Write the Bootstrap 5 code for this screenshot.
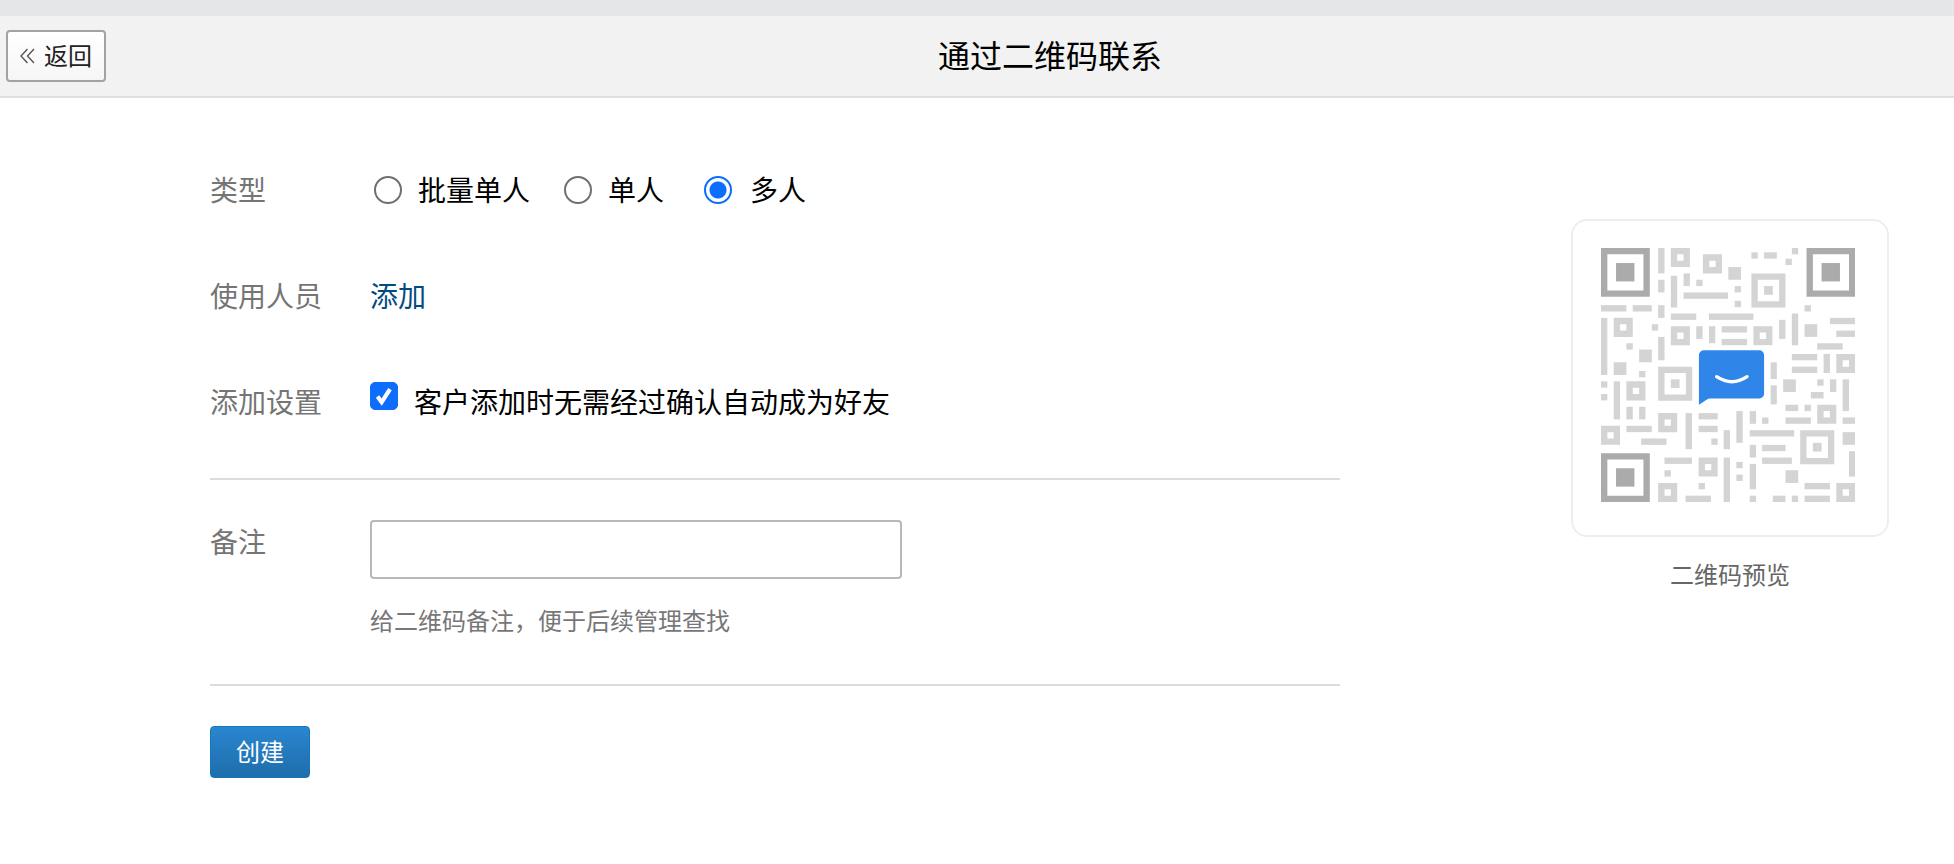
<!DOCTYPE html>
<html lang="zh-CN">
<head>
<meta charset="utf-8">
<title>通过二维码联系</title>
<link rel="stylesheet" href="https://cdn.jsdelivr.net/npm/bootstrap@5.3.0/dist/css/bootstrap.min.css">
<style>
html,body{height:100%;}
body{font-family:"Noto Sans CJK SC","Noto Sans",sans-serif;background:#fff;color:#000;overflow:hidden;}
.topstrip{height:16px;background:#e5e6e8;}
.pagehead{height:82px;background:#f2f2f2;border-bottom:2px solid #dcdfe3;padding-left:6px;}
.backbtn{width:100px;height:52px;padding:0;border:2px solid #a2a2a2;border-radius:4px;background:linear-gradient(#fff,#f6f6f6);color:#222;font-size:24px;line-height:1;gap:9px;}
.backbtn:hover{background:#fff;border-color:#a2a2a2;color:#222;}
.backbtn span{padding-bottom:3px;}
.headtitle{font-size:32px;font-weight:400;margin:0;padding:0 0 4px 40px;line-height:1;}
.mainarea{padding-left:210px;}
.formcol{width:1130px;padding-top:39px;}
.formrow{height:106px;}
.fieldlabel{width:160px;font-size:28px;color:#757575;line-height:1;flex:none;margin:0;padding-bottom:2px;}
.optlabel{font-size:28px;line-height:1;margin:0;padding-bottom:2px;}
.form-check-input.bigradio{width:28px;height:28px;margin:0;border:2px solid #707070;flex:none;background-color:#fff;}
.form-check-input.bigradio:checked{background-color:#fff;border-color:#0d6efd;background-image:radial-gradient(circle,#0d6efd 0,#0d6efd 8px,transparent 9px);background-size:100% 100%;}
.form-check-input.bigcheck{width:28px;height:28px;margin:-12px 0 0;flex:none;border-radius:5px;background-size:100% 100%;}
.form-check-input.bigcheck:checked{background-image:url("data:image/svg+xml,%3csvg xmlns='http://www.w3.org/2000/svg' viewBox='0 0 28 28'%3e%3cpath fill='none' stroke='%23fff' stroke-width='4.500' d='M7 14.500l4.500 6 9-14'/%3e%3c/svg%3e");}
.radiopad{margin-left:4px;gap:16px;}
.radiogap{margin-left:34px;gap:16px;}
.radiogap-wide{margin-left:40px;gap:18px;}
.addlink{font-size:28px;color:#004b7f;text-decoration:none;line-height:1;padding-bottom:2px;}
.rule{height:2px;background:#dcdcdf;}
.rule-a{margin-top:23px;}
.noterow{padding-top:40px;}
.noterow .fieldlabel{margin-top:7px;}
.noteinput{width:532px;height:59px;border:2px solid #b8b8b8;border-radius:4px;}
.hinttext{font-size:24px;line-height:1;color:#777;margin-top:29px;margin-bottom:52px;}
.createbtn{width:100px;height:52px;margin-top:40px;padding:0 0 2px;font-size:24px;line-height:1;color:#fff;background:linear-gradient(#2a86d0,#1f6dab);border:1px solid #0f78bf;border-radius:4px;}
.createbtn:hover{color:#fff;background:linear-gradient(#2a86d0,#1f6dab);}
.qrcol{width:318px;margin-left:231px;margin-top:121px;}
.qrframe{width:318px;height:318px;border:2px solid #eeeeef;border-radius:16px;padding:27px 28px;background:#fff;}
.qrframe svg{display:block;width:254px;height:254px;}
.qrcaption{font-size:24px;line-height:1;color:#666;margin-top:25px;text-align:center;}
</style>
</head>
<body>
<div class="topstrip"></div>
<header class="pagehead d-flex align-items-center">
  <button type="button" class="btn backbtn d-flex align-items-center justify-content-center">
    <svg width="15" height="16" viewBox="0 0 15 16" fill="none" stroke="#555" stroke-width="1.4"><path d="M7.500 1 1 8l6.500 7M14 1 7.500 8l6.500 7"/></svg>
    <span>返回</span>
  </button>
  <h1 class="headtitle flex-grow-1 text-center">通过二维码联系</h1>
</header>
<main class="mainarea d-flex align-items-start">
  <form class="formcol">
    <div class="formrow d-flex align-items-center">
      <label class="fieldlabel">类型</label>
      <div class="d-flex align-items-center">
        <div class="d-flex align-items-center radiopad">
          <input class="form-check-input bigradio" type="radio" name="kind" id="k1">
          <label class="optlabel" for="k1">批量单人</label>
        </div>
        <div class="d-flex align-items-center radiogap">
          <input class="form-check-input bigradio" type="radio" name="kind" id="k2">
          <label class="optlabel" for="k2">单人</label>
        </div>
        <div class="d-flex align-items-center radiogap-wide">
          <input class="form-check-input bigradio" type="radio" name="kind" id="k3" checked>
          <label class="optlabel" for="k3">多人</label>
        </div>
      </div>
    </div>
    <div class="formrow d-flex align-items-center">
      <label class="fieldlabel">使用人员</label>
      <a class="addlink" href="#">添加</a>
    </div>
    <div class="formrow d-flex align-items-center">
      <label class="fieldlabel">添加设置</label>
      <div class="d-flex align-items-center gap-3">
        <input class="form-check-input bigcheck" type="checkbox" id="auto" checked>
        <label class="optlabel" for="auto">客户添加时无需经过确认自动成为好友</label>
      </div>
    </div>
    <div class="rule rule-a"></div>
    <div class="noterow d-flex align-items-start">
      <label class="fieldlabel" for="note">备注</label>
      <div>
        <input class="form-control noteinput" type="text" id="note">
        <div class="hinttext">给二维码备注，便于后续管理查找</div>
      </div>
    </div>
    <div class="rule"></div>
    <button type="button" class="btn createbtn">创建</button>
  </form>
  <aside class="qrcol">
    <div class="qrframe">
      <svg viewBox="125 114 760 760" role="img" aria-label="二维码">
        <g fill="#ababab">
          <path fill-rule="evenodd" d="M125 114h146v146H125zM144 133v108h108V133z"/>
          <rect x="170" y="159" width="55" height="55"/>
          <path fill-rule="evenodd" d="M740 114h146v146H740zM759 133v108h108V133z"/>
          <rect x="785" y="159" width="55" height="55"/>
          <path fill-rule="evenodd" d="M125 728h146v146H125zM144 747v108h108V747z"/>
          <rect x="170" y="773" width="55" height="55"/>
        </g>
        <g fill="#d4d4d4">
          <rect x="296" y="114" width="19" height="76"/>
          <path fill-rule="evenodd" d="M334 114h57v57h-57zM353 133v19h19v-19z"/>
          <path fill-rule="evenodd" d="M430 133h57v57h-57zM449 152v19h19v-19z"/>
          <rect x="506" y="171" width="38" height="38"/>
          <rect x="575" y="127" width="19" height="19"/>
          <rect x="613" y="127" width="38" height="19"/>
          <rect x="696" y="114" width="19" height="19"/>
          <rect x="677" y="146" width="19" height="19"/>
          <rect x="296" y="209" width="19" height="38"/>
          <rect x="334" y="197" width="19" height="95"/>
          <rect x="372" y="190" width="19" height="38"/>
          <rect x="410" y="209" width="19" height="19"/>
          <rect x="372" y="247" width="133" height="19"/>
          <rect x="525" y="228" width="19" height="19"/>
          <rect x="525" y="272" width="19" height="19"/>
          <path fill-rule="evenodd" d="M575 190h102v102H575zM594 209v64h64v-64z"/>
          <rect x="613" y="228" width="26" height="26"/>
          <rect x="125" y="285" width="76" height="19"/>
          <rect x="220" y="285" width="57" height="19"/>
          <rect x="296" y="285" width="19" height="38"/>
          <rect x="734" y="285" width="19" height="19"/>
          <rect x="334" y="310" width="76" height="19"/>
          <rect x="448" y="310" width="133" height="19"/>
          <rect x="810" y="323" width="76" height="19"/>
          <rect x="829" y="361" width="57" height="19"/>
          <rect x="125" y="323" width="19" height="171"/>
          <path fill-rule="evenodd" d="M163 323h57v57h-57zM182 342v19h19v-19z"/>
          <rect x="277" y="342" width="19" height="19"/>
          <path fill-rule="evenodd" d="M334 348h57v57h-57zM353 367v19h19v-19z"/>
          <rect x="410" y="348" width="19" height="38"/>
          <rect x="448" y="348" width="19" height="51"/>
          <rect x="486" y="348" width="76" height="19"/>
          <rect x="486" y="386" width="76" height="19"/>
          <path fill-rule="evenodd" d="M581 348h57v57h-57zM600 367v19h19v-19z"/>
          <rect x="658" y="329" width="19" height="57"/>
          <rect x="696" y="310" width="19" height="95"/>
          <rect x="734" y="342" width="38" height="38"/>
          <rect x="772" y="399" width="76" height="19"/>
          <rect x="201" y="399" width="19" height="19"/>
          <rect x="239" y="418" width="38" height="38"/>
          <rect x="296" y="380" width="19" height="70"/>
          <rect x="696" y="431" width="76" height="19"/>
          <rect x="696" y="469" width="76" height="19"/>
          <rect x="791" y="431" width="19" height="57"/>
          <path fill-rule="evenodd" d="M829 431h57v57h-57zM848 450v19h19v-19z"/>
          <rect x="163" y="456" width="38" height="38"/>
          <rect x="239" y="482" width="19" height="19"/>
          <path fill-rule="evenodd" d="M296 469h102v102H296zM315 488v64h64v-64z"/>
          <rect x="334" y="507" width="26" height="26"/>
          <rect x="632" y="456" width="19" height="50"/>
          <rect x="125" y="513" width="19" height="19"/>
          <rect x="125" y="551" width="19" height="19"/>
          <rect x="163" y="513" width="19" height="114"/>
          <path fill-rule="evenodd" d="M201 513h57v57h-57zM220 532v19h19v-19z"/>
          <rect x="670" y="507" width="38" height="38"/>
          <rect x="772" y="507" width="19" height="19"/>
          <rect x="810" y="507" width="19" height="38"/>
          <rect x="848" y="507" width="19" height="95"/>
          <rect x="753" y="545" width="38" height="19"/>
          <rect x="632" y="525" width="19" height="57"/>
          <rect x="677" y="583" width="38" height="19"/>
          <rect x="734" y="583" width="19" height="19"/>
          <path fill-rule="evenodd" d="M772 583h57v57h-57zM791 602v19h19v-19z"/>
          <rect x="201" y="589" width="19" height="38"/>
          <rect x="239" y="589" width="19" height="38"/>
          <rect x="530" y="602" width="19" height="95"/>
          <rect x="570" y="602" width="19" height="38"/>
          <rect x="607" y="621" width="19" height="19"/>
          <rect x="677" y="621" width="76" height="19"/>
          <rect x="848" y="621" width="38" height="19"/>
          <path fill-rule="evenodd" d="M296 608h57v57h-57zM315 627v19h19v-19z"/>
          <rect x="378" y="608" width="19" height="108"/>
          <rect x="417" y="608" width="57" height="19"/>
          <rect x="417" y="646" width="57" height="19"/>
          <rect x="201" y="646" width="76" height="19"/>
          <path fill-rule="evenodd" d="M125 646h57v57h-57zM144 665v19h19v-19z"/>
          <rect x="245" y="684" width="76" height="19"/>
          <rect x="455" y="684" width="19" height="19"/>
          <rect x="492" y="659" width="19" height="57"/>
          <rect x="570" y="659" width="133" height="19"/>
          <path fill-rule="evenodd" d="M721 659h102v102H721zM740 678v64h64v-64z"/>
          <rect x="759" y="697" width="26" height="26"/>
          <rect x="848" y="665" width="38" height="38"/>
          <rect x="607" y="703" width="70" height="19"/>
          <rect x="570" y="703" width="19" height="38"/>
          <rect x="607" y="741" width="89" height="19"/>
          <rect x="315" y="741" width="82" height="19"/>
          <path fill-rule="evenodd" d="M417 741h57v57h-57zM436 760v19h19v-19z"/>
          <rect x="492" y="741" width="19" height="133"/>
          <rect x="530" y="754" width="19" height="19"/>
          <rect x="530" y="792" width="19" height="19"/>
          <rect x="570" y="760" width="19" height="76"/>
          <rect x="677" y="779" width="38" height="38"/>
          <rect x="867" y="722" width="19" height="76"/>
          <rect x="315" y="779" width="19" height="19"/>
          <path fill-rule="evenodd" d="M296 817h57v57h-57zM315 836v19h19v-19z"/>
          <rect x="417" y="817" width="19" height="19"/>
          <rect x="378" y="855" width="76" height="19"/>
          <rect x="734" y="817" width="76" height="19"/>
          <rect x="734" y="855" width="76" height="19"/>
          <path fill-rule="evenodd" d="M829 817h57v57h-57zM848 836v19h19v-19z"/>
          <rect x="570" y="855" width="19" height="19"/>
          <rect x="639" y="855" width="38" height="19"/>
          <rect x="696" y="855" width="19" height="19"/>
        </g>
        <rect x="410" y="406" width="222" height="176" fill="#fff"/>
        <path d="M433 420h166a14 14 0 0 1 14 14v116a14 14 0 0 1-14 14H452q-6 0-11 4l-23 15V435a15 15 0 0 1 15-15z" fill="#2f86e8"/>
        <path d="M471 499q46 30 91 0" fill="none" stroke="#fff" stroke-width="10" stroke-linecap="round"/>
      </svg>
    </div>
    <div class="qrcaption">二维码预览</div>
  </aside>
</main>
<script src="https://cdn.jsdelivr.net/npm/bootstrap@5.3.0/dist/js/bootstrap.bundle.min.js"></script>
</body>
</html>
